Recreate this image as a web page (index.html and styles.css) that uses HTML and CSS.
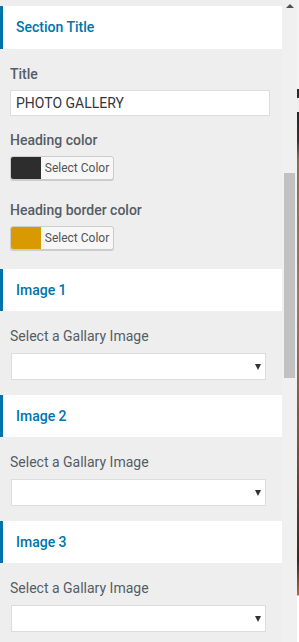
FILE: index.html
```html
<!DOCTYPE html>
<html lang="en">
<head>
    <meta charset="UTF-8">
    <meta name="viewport" content="width=device-width, initial-scale=1.0">
    <title>Photo gallery settings</title>
    <link rel="stylesheet" href="styles.css">
</head>
<body>
    <div class="frame">
        <div class="panel">
            <div class="section-head first">Section Title</div>
            <div class="control top">
                <label class="control-title">Title</label>
                <input class="text-input" type="text" value="PHOTO GALLERY">
            </div>
            <div class="control">
                <label class="control-title">Heading color</label>
                <button class="color-button">
                    <span class="swatch dark"></span>
                    <span class="color-text">Select Color</span>
                </button>
            </div>
            <div class="control last">
                <label class="control-title">Heading border color</label>
                <button class="color-button">
                    <span class="swatch gold"></span>
                    <span class="color-text">Select Color</span>
                </button>
            </div>

            <!-- Gallery images -->
            <div class="section-head">Image 1</div>
            <div class="image-control">
                <label class="image-label">Select a Gallary Image</label>
                <div class="select-wrap">
                    <select class="image-select"><option></option></select>
                    <span class="select-arrow"></span>
                </div>
            </div>
            <div class="section-head">Image 2</div>
            <div class="image-control">
                <label class="image-label">Select a Gallary Image</label>
                <div class="select-wrap">
                    <select class="image-select"><option></option></select>
                    <span class="select-arrow"></span>
                </div>
            </div>
            <div class="section-head">Image 3</div>
            <div class="image-control">
                <label class="image-label">Select a Gallary Image</label>
                <div class="select-wrap">
                    <select class="image-select"><option></option></select>
                    <span class="select-arrow"></span>
                </div>
            </div>
        </div>
        <div class="scroll-track">
            <span class="scroll-arrow"></span>
            <span class="scroll-thumb"></span>
        </div>
        <div class="edge"></div>
    </div>
</body>
</html>
```

FILE: styles.css
```css
html, body {
    margin: 0;
    height: 100%;
    overflow: hidden;
}

body {
    background: #eeeeee;
    font-family: Roboto, 'Liberation Sans', sans-serif;
    color: #555d66;
}

.frame {
    display: flex;
    height: 642px;
}

.panel {
    width: 282px;
    flex-shrink: 0;
    padding-top: 6px;
    background: #eeeeee;
}

.section-head {
    height: 42px;
    line-height: 42px;
    background: #ffffff;
    border-left: 3px solid #0073aa;
    padding-left: 13px;
    font-size: 14px;
    font-weight: 500;
    color: #0073aa;
}

.section-head.first {
    height: 43px;
    line-height: 43px;
}

.control {
    padding: 0 10px;
    margin-top: 14px;
}

.control.top {
    margin-top: 15px;
}

.control.last {
    margin-top: 20px;
    margin-bottom: 19px;
}

.control-title {
    display: block;
    font-size: 14px;
    font-weight: 500;
    line-height: 20px;
    margin-bottom: 6px;
    color: #555d66;
}

.text-input {
    display: block;
    box-sizing: border-box;
    width: 260px;
    height: 26px;
    margin: 0;
    padding: 0 5px;
    border: 1px solid #dddddd;
    background: #ffffff;
    font-family: Roboto, 'Liberation Sans', sans-serif;
    font-size: 14px;
    color: #32373c;
    outline: none;
}

.color-button {
    display: flex;
    box-sizing: border-box;
    width: 104px;
    height: 24px;
    margin: 0;
    padding: 0;
    border: 1px solid #cccccc;
    border-radius: 3px;
    background: #f7f7f7;
    box-shadow: 0 1px 0 #cccccc;
    overflow: hidden;
    cursor: pointer;
}

.swatch {
    width: 30px;
    height: 100%;
}

.swatch.dark {
    background: #2d2d2d;
}

.swatch.gold {
    background: #d89a00;
}

.color-text {
    flex: 1;
    line-height: 22px;
    text-align: center;
    font-family: Roboto, 'Liberation Sans', sans-serif;
    font-size: 12px;
    color: #555555;
}

.image-control {
    padding: 15px 16px 15px 11px;
}

.image-label {
    display: block;
    font-size: 14px;
    line-height: 20px;
    margin-left: -1px;
    margin-bottom: 7px;
    color: #555d66;
}

.select-wrap {
    position: relative;
    width: 255px;
    height: 27px;
}

.image-select {
    appearance: none;
    -webkit-appearance: none;
    box-sizing: border-box;
    width: 100%;
    height: 100%;
    margin: 0;
    border: 1px solid #dddddd;
    border-radius: 0;
    background: #ffffff;
    outline: none;
}

.select-arrow {
    position: absolute;
    right: 5px;
    top: 11px;
    border-left: 3px solid transparent;
    border-right: 3px solid transparent;
    border-top: 6px solid #333333;
    pointer-events: none;
}

.scroll-track {
    width: 15px;
    flex-shrink: 0;
    display: flex;
    flex-direction: column;
    align-items: center;
    background: #f0f0f0;
}

.scroll-arrow {
    margin-top: 4px;
    border-left: 4px solid transparent;
    border-right: 4px solid transparent;
    border-bottom: 4px solid #505050;
}

.scroll-thumb {
    margin-top: 165px;
    width: 11px;
    height: 205px;
    background: #c1c1c1;
}

.edge {
    width: 2px;
    flex-shrink: 0;
    background: linear-gradient(180deg,
        #f4f4f4 0, #f4f4f4 89px,
        #2a2a2a 89px, #2a2a2a 98px,
        #eeeeee 98px, #eeeeee 112px,
        #262626 112px, #3a3030 140px,
        #8c6a50 160px, #a0785a 300px,
        #7a5038 450px, #3a2a22 560px,
        #b06a30 595px, #ffffff 596px, #ffffff 642px);
}
```
